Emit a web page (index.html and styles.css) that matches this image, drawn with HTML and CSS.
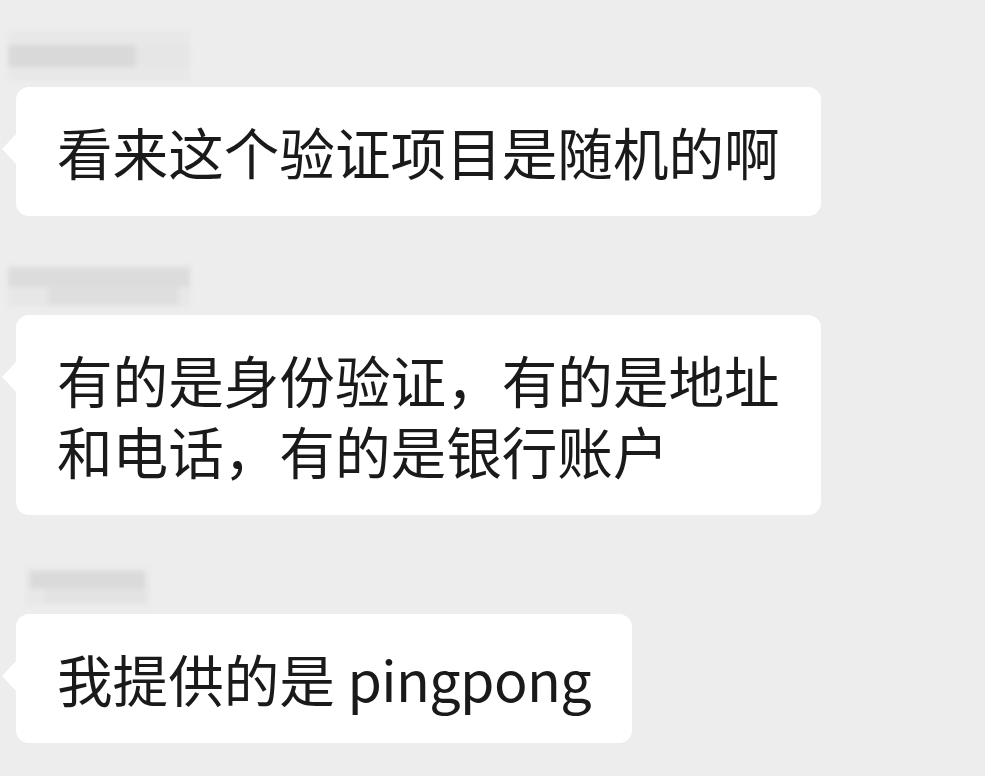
FILE: index.html
```html
<!DOCTYPE html>
<html lang="zh-CN">
<head>
<meta charset="utf-8">
<link rel="stylesheet" href="styles.css">
</head>
<body>
<div class="chat">
  <div class="msg">
    <div class="name-row"><div class="name name-a"></div></div>
    <div class="bubble">看来这个验证项目是随机的啊</div>
  </div>
  <div class="msg">
    <div class="name-row"><div class="name name-b"></div></div>
    <div class="bubble">有的是身份验证，有的是地址<br>和电话，有的是银行账户</div>
  </div>
  <div class="msg">
    <div class="name-row"><div class="name name-c"></div></div>
    <div class="bubble">我提供的是 <span class="latin">pingpong</span></div>
  </div>
</div>
</body>
</html>
```
FILE: styles.css
```css
html, body {
  margin: 0;
  padding: 0;
  background: #ededed;
}
body {
  width: 985px;
  height: 776px;
  overflow: hidden;
  font-family: "Noto Sans CJK SC", "Noto Sans", sans-serif;
  color: #1a1a1a;
}
.chat {
  display: flex;
  flex-direction: column;
  gap: 39px;
  padding-top: 27px;
}
.msg {
  display: flex;
  flex-direction: column;
  align-items: flex-start;
}
.name-row {
  height: 60px;
  width: 100%;
}
.name {
  filter: blur(2.5px);
}
.name-a {
  margin-left: 8px;
  width: 182px;
  height: 50px;
  margin-top: 4px;
  background:
    linear-gradient(#d9d9d9, #d9d9d9) 0 14px / 128px 22px no-repeat,
    linear-gradient(#e6e6e6, #e6e6e6) 128px 14px / 54px 22px no-repeat,
    #e8e8e8;
}
.name-b {
  margin-left: 8px;
  margin-top: 12px;
  width: 182px;
  height: 40px;
  background:
    linear-gradient(#dcdcdc, #dcdcdc) 0 0 / 182px 20px no-repeat,
    linear-gradient(#dedede, #dedede) 40px 20px / 130px 18px no-repeat,
    #e7e7e7;
}
.name-c {
  margin-left: 25px;
  margin-top: 15px;
  width: 125px;
  height: 36px;
  background:
    linear-gradient(#dadada, #dadada) 5px 2px / 115px 18px no-repeat,
    linear-gradient(#e3e3e3, #e3e3e3) 20px 20px / 100px 14px no-repeat,
    #e8e8e8;
}
.bubble {
  position: relative;
  margin-left: 16px;
  background: #ffffff;
  border-radius: 13px;
  padding: 29px 41px 29px 41px;
  font-size: 55.6px;
  line-height: 71px;
  white-space: nowrap;
}
.latin {
  letter-spacing: -0.6px;
}
.bubble::before {
  content: "";
  position: absolute;
  left: -14px;
  top: 46px;
  width: 0;
  height: 0;
  border-top: 16px solid transparent;
  border-bottom: 16px solid transparent;
  border-right: 15px solid #ffffff;
}
```
